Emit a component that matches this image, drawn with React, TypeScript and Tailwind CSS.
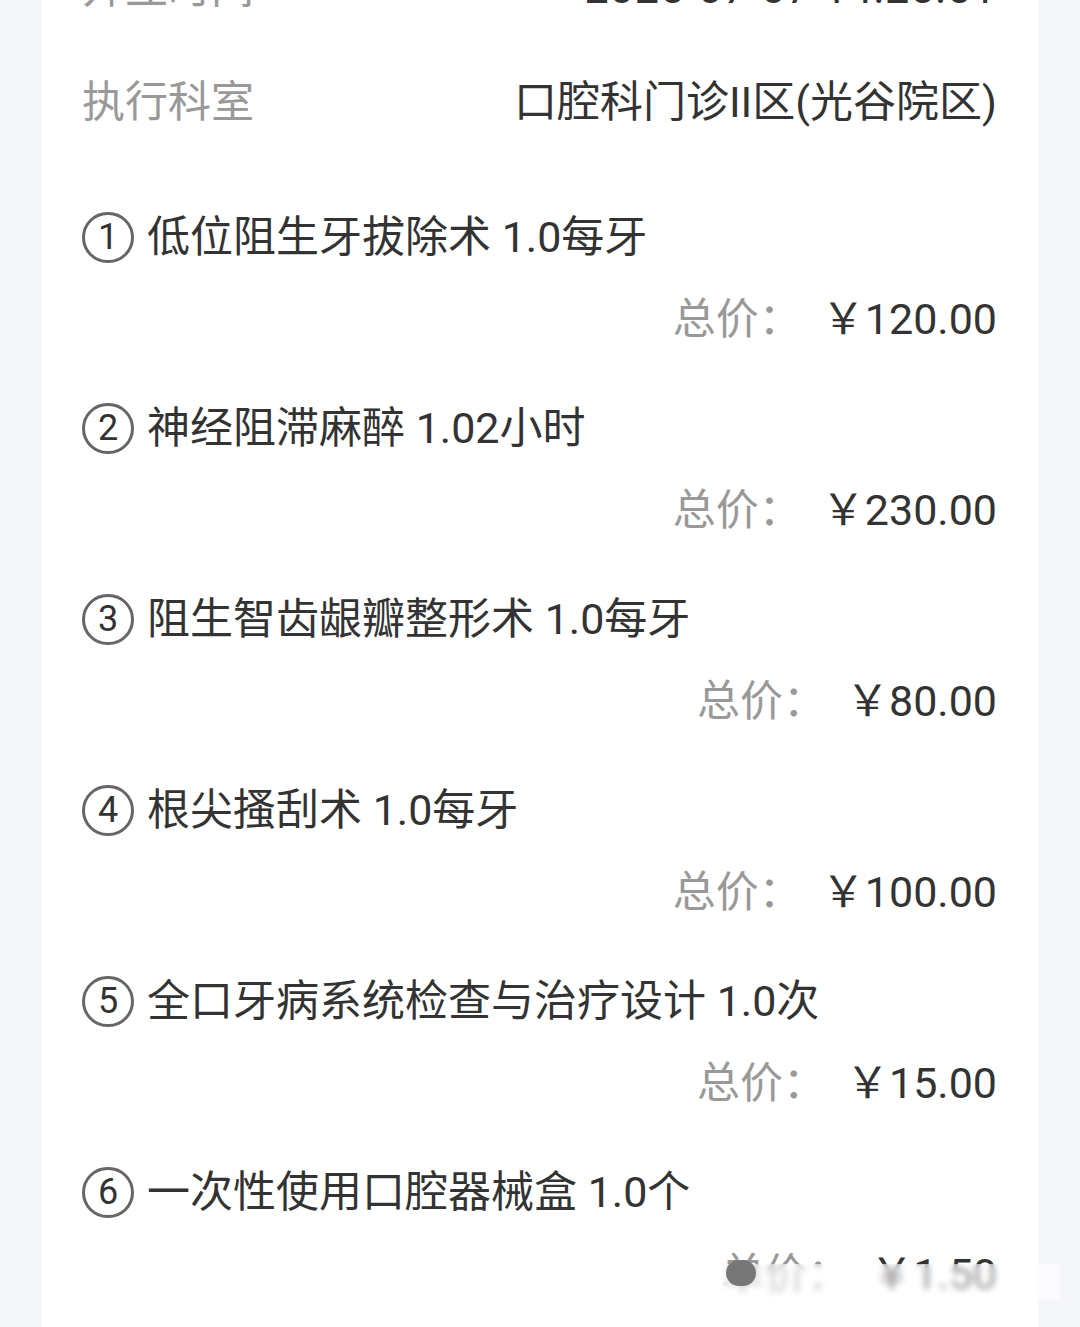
import React from "react";

const font = { fontFamily: 'Roboto, "Noto Sans CJK SC", "Noto Sans", sans-serif' };

const items = [
  { n: "1", name: "低位阻生牙拔除术 1.0每牙", label: "总价：", price: "￥120.00" },
  { n: "2", name: "神经阻滞麻醉 1.02小时", label: "总价：", price: "￥230.00" },
  { n: "3", name: "阻生智齿龈瓣整形术 1.0每牙", label: "总价：", price: "￥80.00" },
  { n: "4", name: "根尖搔刮术 1.0每牙", label: "总价：", price: "￥100.00" },
  { n: "5", name: "全口牙病系统检查与治疗设计 1.0次", label: "总价：", price: "￥15.00" },
  { n: "6", name: "一次性使用口腔器械盒 1.0个", label: "单价：", price: "￥1.50" },
];

export default function App() {
  return (
    <div className="relative h-[1327px] w-[1080px] overflow-hidden bg-[#f5f6fa]" style={font}>
      <div className="mx-[42px] -mt-[40px] flex flex-col bg-white pb-[40px] pl-[40px] pr-[41px]">
        <div className="flex h-[56px] items-center justify-between text-[43px] leading-none">
          <span className="text-[#999999]">开立时间</span>
          <span className="tracking-[1px] text-[#333333]">2025-07-07 14:25:51</span>
        </div>
        <div className="mt-[58px] flex h-[56px] items-center justify-between text-[43px] leading-none">
          <span className="text-[#999999]">执行科室</span>
          <span className="text-[#333333]">口腔科门诊II区(光谷院区)</span>
        </div>
        <div className="mt-[79px] flex flex-col gap-[53px]">
          {items.map((it) => (
            <div key={it.n} className="flex flex-col gap-[26px]">
              <div className="flex h-[56px] items-center text-[43px] leading-none text-[#333333]">
                <span className="mr-[13px] flex h-[51px] w-[52px] shrink-0 items-center justify-center rounded-full border-[3px] border-[#666666] text-[36px] text-[#333333]">
                  {it.n}
                </span>
                <span>{it.name}</span>
              </div>
              <div className="flex h-[56px] items-center justify-end text-[43px] leading-none">
                <span className="mr-[20px] text-[#999999]">{it.label}</span>
                <span className="text-[#333333]">{it.price}</span>
              </div>
            </div>
          ))}
        </div>
      </div>
      <div className="absolute left-[722px] top-[1264px] h-[36px] w-[338px] bg-white/50 backdrop-blur-[3px]" />
      <div className="absolute left-[726px] top-[1260px] h-[26px] w-[30px] rounded-full bg-[#777777]" />
    </div>
  );
}
